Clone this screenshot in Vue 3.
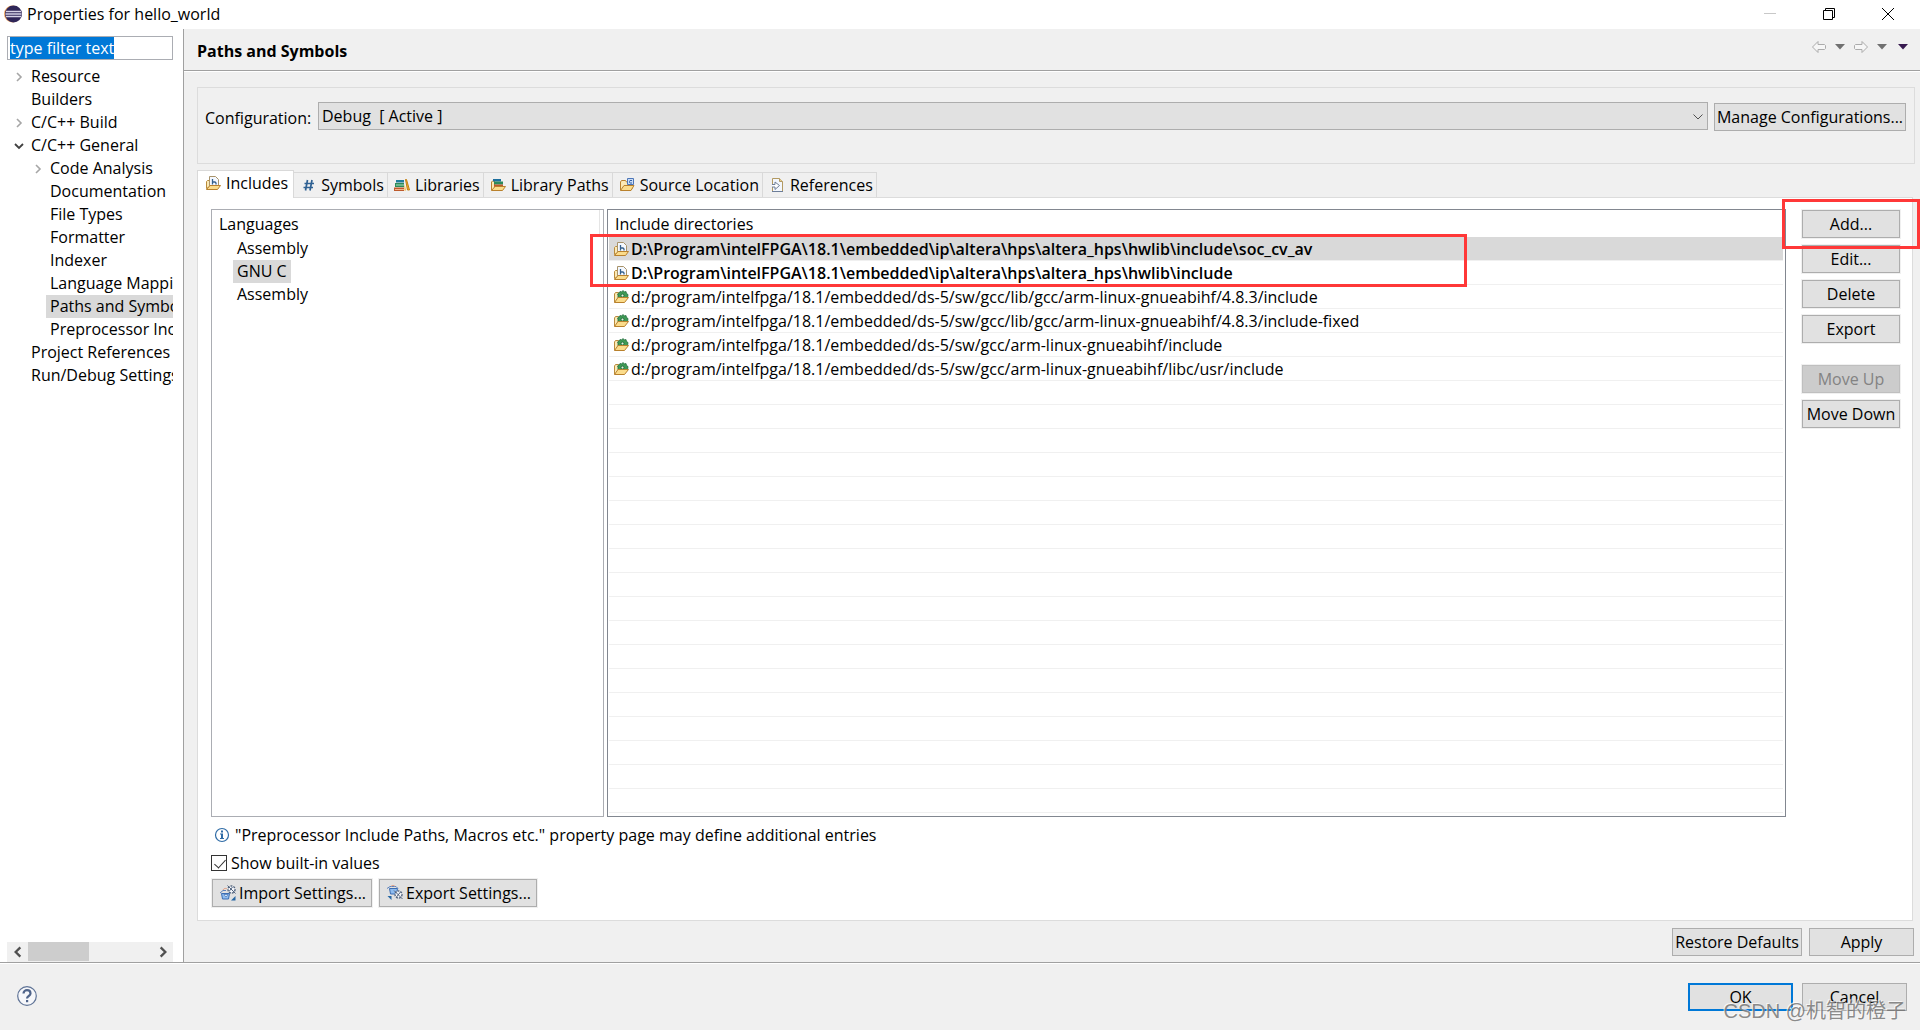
<template>
  <div class="dialog">
    <!-- icon sprite -->
    <svg class="sprite" aria-hidden="true">
      <symbol id="i-includes" viewBox="0 0 16 16">
        <path d="M1.5 13.5v-7l1-1H5v6z" fill="#fbe9b5" stroke="#b98b3c" />
        <path d="M4.5 1.5h6l3 3V11h-9z" fill="#f4f8ff" stroke="#a8936a" />
        <path d="M7.5 4v5.500M7.5 7H10l1 1v1.500" fill="none" stroke="#34608c" stroke-width="1.300" />
        <path d="M1.5 14.5 5 10.500h10.500l-3 4z" fill="#fbdc8b" stroke="#b9812d" />
      </symbol>
      <symbol id="i-symbols" viewBox="0 0 16 16">
        <path d="M7.5 3 5.500 13.500M12 3 10 13.500M4.500 6.500H14M3.500 10.500H13" fill="none" stroke="#2f6193" stroke-width="1.700" />
      </symbol>
      <symbol id="i-libraries" viewBox="0 0 16 16">
        <path d="M2 3h8v2.500H2z" fill="#1f7d9c" />
        <path d="M1 6h9v4H1z" fill="#2c8a5a" />
        <path d="M2 8h8" stroke="#a8dfbf" />
        <path d="M0 10.500h10V14H0z" fill="#bd5a2c" />
        <path d="M1 12.500h9" stroke="#f0b48c" />
        <path d="M11.500 2.500h1L15.500 13h-2z" fill="#f6b62c" stroke="#c07d13" />
        <path d="m10.500 7 1.500 6.500h-1.500z" fill="#f6b62c" />
      </symbol>
      <symbol id="i-libpaths" viewBox="0 0 16 16">
        <path d="M1.500 13V5l1-1h2v8z" fill="#fbe9b5" stroke="#b9812d" />
        <path d="M3 2h8v2.500H3z" fill="#1d6f9e" />
        <path d="M4 4.500h9v3H4z" fill="#2c8a5a" />
        <path d="M4 7.500h9V10H4z" fill="#bd5a2c" />
        <path d="M1.500 13.500 5 9.500h10.500l-3 4z" fill="#fbdc8b" stroke="#b9812d" />
      </symbol>
      <symbol id="i-source" viewBox="0 0 16 16">
        <path d="M1.500 13V5l1-1.500h4L7.500 5H13v7z" fill="#fbe9b5" stroke="#b9812d" />
        <path d="M8.500 1.500h6v6h-6z" fill="#c9dcf5" stroke="#4d76b8" />
        <path d="M13 3.500h-2l-.5 1v1l.5.500h2" fill="none" stroke="#2f5fa8" />
        <path d="M1.500 13.500 5 8.500h10l-3 5z" fill="#fbdc8b" stroke="#b9812d" />
      </symbol>
      <symbol id="i-references" viewBox="0 0 16 16">
        <path d="M3.500 1.500h7l3 3v10h-10z" fill="#f3f7fd" stroke="#b39a62" />
        <path d="M10.500 1.500v3h3" fill="#e7cf94" stroke="#b39a62" />
        <path d="M3 14.500h11" stroke="#6c7d98" />
        <path d="M3 7.500h3V5l4.500 3.500L6 12.500V10H3" fill="#fff" stroke="#6f7f97" />
      </symbol>
      <symbol id="i-builtin" viewBox="0 0 16 16">
        <path d="M1.500 13V5l1-1.500h3l1 1.500V11z" fill="#fbe9b5" stroke="#b98b3c" />
        <path d="M5 9V6l-.5-1L6 4l1-1.500 1.500.500L10 1.500l1.500 1.500L13 2.500l.500 2L15 5.500 14.500 9z" fill="#3f9a55" stroke="#226b3d" stroke-width=".8" />
        <circle cx="9.500" cy="6.500" r="1.500" fill="#e3f2df" stroke="#226b3d" />
        <path d="M1.500 13.500 5 8.500h10.500l-4 5z" fill="#fbdc8b" stroke="#b9812d" />
      </symbol>
      <symbol id="i-info" viewBox="0 0 16 16">
        <circle cx="8" cy="8" r="6.500" fill="#fff" stroke="#2e6ba6" stroke-width="1.200" />
        <path d="M7 3.500h2v2H7zM6 6.500h3V11h1v1H6v-1h1V7.500H6z" fill="#2e6ba6" />
      </symbol>
      <symbol id="i-import" viewBox="0 0 16 16">
        <path d="M1.500 8.500h8l-1 5.500h-6z" fill="#8ebcf0" stroke="#3c6db2" />
        <path d="M0 8 3 5.500h3" fill="none" stroke="#5d83bd" />
        <path d="M4 9.500h4L6 12z" fill="#fff" stroke="#3c6db2" stroke-width=".7" />
        <path d="M3 5c1-2 3-2 4-1" fill="none" stroke="#e1a58d" />
        <circle cx="11.500" cy="4.500" r="3.500" fill="#f4f6fa" stroke="#53657f" stroke-width="1.400" stroke-dasharray="2 1" />
        <path d="m7.500.5 8 8M12.500 2 9 6.500" stroke="#53657f" />
        <path d="M15.500 11v4.500H11z" fill="#2667a4" />
      </symbol>
      <symbol id="i-export" viewBox="0 0 16 16">
        <path d="M2.500 3.500h8l-1 5.500h-6z" fill="#8ebcf0" stroke="#3c6db2" />
        <path d="M0 3.500 3 1.500h6l2 2" fill="none" stroke="#5d83bd" />
        <path d="M4 1.500c1-1.500 3-1.500 4 0" fill="none" stroke="#e1a58d" />
        <circle cx="11.500" cy="9.500" r="3.500" fill="#f4f6fa" stroke="#53657f" stroke-width="1.400" stroke-dasharray="2 1" />
        <path d="m7 5.500 8.500 8.500M13.500 7 9.500 12" stroke="#53657f" />
        <path d="M.5 11h4v4z" fill="#2667a4" />
      </symbol>
    </svg>

    <header class="titlebar">
      <svg class="app-icon" viewBox="0 0 18 18">
        <circle cx="8.500" cy="9" r="8.500" fill="#f0a35c" />
        <circle cx="9.500" cy="9" r="8.500" fill="#2f2658" />
        <path d="M2 6.500h15M1.500 9h16M2 11.500h15" stroke="#d5d2e6" stroke-width="1.400" />
      </svg>
      <span class="title">Properties for hello_world</span>
      <div class="window-buttons">
        <button type="button" aria-label="Minimize" disabled>
          <svg viewBox="0 0 14 14"><path d="M1 6.500h12" stroke="#c8c8c8" /></svg>
        </button>
        <button type="button" aria-label="Restore">
          <svg viewBox="0 0 14 14"><path d="M1.500 3.500h9v9h-9zM3.500 3.500v-2h9v9h-2" fill="none" stroke="#000" /></svg>
        </button>
        <button type="button" aria-label="Close">
          <svg viewBox="0 0 14 14"><path d="m1 1 12 12M13 1 1 13" stroke="#000" /></svg>
        </button>
      </div>
    </header>

    <div class="body">
      <aside class="sidebar">
        <input ref="filterRef" v-model="filter" class="filter" type="text" aria-label="Filter" />
        <ul class="tree">
          <li v-for="item in pages" :key="item.name" :class="['tree-row', { child: item.child }]">
            <button v-if="item.state" type="button" class="twisty" :aria-label="'Toggle ' + item.name">
              <svg v-if="item.state === 'open'" viewBox="0 0 12 12"><path d="m2 4 4 4 4-4" fill="none" stroke="#404040" stroke-width="1.800" /></svg>
              <svg v-else viewBox="0 0 12 12"><path d="m4 2 4 4-4 4" fill="none" stroke="#a6a6a6" stroke-width="1.600" /></svg>
            </button>
            <span v-else class="twisty" />
            <span :class="['tree-label', { selected: item.name === currentPage }]">{{ item.name }}</span>
          </li>
        </ul>
        <div class="scrollbar">
          <button type="button" aria-label="Scroll left">
            <svg viewBox="0 0 12 12"><path d="M8 2 4 6l4 4" fill="none" stroke="#505050" stroke-width="2" /></svg>
          </button>
          <div class="track"><div class="thumb" /></div>
          <button type="button" aria-label="Scroll right">
            <svg viewBox="0 0 12 12"><path d="m4 2 4 4-4 4" fill="none" stroke="#505050" stroke-width="2" /></svg>
          </button>
        </div>
      </aside>

      <main class="page">
        <div class="page-header">
          <h1>{{ currentPage }}</h1>
          <div class="history">
            <button type="button" aria-label="Back">
              <svg width="16" height="14" viewBox="0 0 16 14"><path d="M1.500 7 7 1.500V4.500h6.500l1 1v3l-1 1H7v3z" fill="#f6f6f6" stroke="#ababab" /></svg>
            </button>
            <button type="button" aria-label="Back history">
              <svg width="10" height="6" viewBox="0 0 10 6"><path d="M0 0h10L5 5.500z" fill="#707070" /></svg>
            </button>
            <button type="button" aria-label="Forward">
              <svg width="16" height="14" viewBox="0 0 16 14"><path d="M14.500 7 9 1.500V4.500H2.500l-1 1v3l1 1H9v3z" fill="#f6f6f6" stroke="#ababab" /></svg>
            </button>
            <button type="button" aria-label="Forward history">
              <svg width="10" height="6" viewBox="0 0 10 6"><path d="M0 0h10L5 5.500z" fill="#707070" /></svg>
            </button>
            <button type="button" class="view-menu" aria-label="Menu">
              <svg width="10" height="6" viewBox="0 0 10 6"><path d="M0 0h10L5 5.500z" fill="#37194f" /></svg>
            </button>
          </div>
        </div>

        <div class="page-content">
          <section class="config">
            <label for="configuration">Configuration:</label>
            <div class="select-wrap">
              <select id="configuration">
                <option>Debug&nbsp; [ Active ]</option>
              </select>
              <svg class="chevron" viewBox="0 0 10 6"><path d="m.5.500 4.500 4.500L9.500.500" fill="none" stroke="#505050" /></svg>
            </div>
            <button type="button" class="btn manage">Manage Configurations...</button>
          </section>

          <div class="tabs" role="tablist">
            <button
              v-for="tab in tabs"
              :key="tab.name"
              type="button"
              role="tab"
              :class="['tab', { active: tab.name === activeTab }]"
              :aria-selected="tab.name === activeTab"
              @click="activeTab = tab.name"
            >
              <svg class="icon"><use :href="'#' + tab.icon" /></svg>
              <span>{{ tab.name }}</span>
            </button>
          </div>

          <section class="pane">
            <div class="lists">
              <div class="languages">
                <div class="list-header">Languages</div>
                <ul>
                  <li v-for="(lang, i) in languages" :key="i">
                    <span :class="{ selected: lang === 'GNU C' }">{{ lang }}</span>
                  </li>
                </ul>
              </div>

              <div class="directories">
                <table>
                  <thead>
                    <tr><th>Include directories</th></tr>
                  </thead>
                  <tbody>
                    <tr v-for="(dir, i) in directories" :key="dir.path" :class="{ user: dir.user, current: i === 0 }">
                      <td>
                        <div class="cell">
                          <svg class="icon"><use :href="dir.user ? '#i-includes' : '#i-builtin'" /></svg>
                          <span>{{ dir.path }}</span>
                        </div>
                      </td>
                    </tr>
                  </tbody>
                </table>
                <div class="empty-rows" />
                <div class="mark mark-paths" />
              </div>

              <div class="actions">
                <button type="button" class="btn">Add...</button>
                <button type="button" class="btn">Edit...</button>
                <button type="button" class="btn">Delete</button>
                <button type="button" class="btn">Export</button>
                <button type="button" class="btn move-up" disabled>Move Up</button>
                <button type="button" class="btn">Move Down</button>
                <div class="mark mark-add" />
              </div>
            </div>

            <p class="info">
              <svg class="icon"><use href="#i-info" /></svg>
              <span>"Preprocessor Include Paths, Macros etc." property page may define additional entries</span>
            </p>
            <label class="check">
              <input v-model="showBuiltin" type="checkbox" />
              <span>Show built-in values</span>
            </label>
            <div class="settings">
              <button type="button" class="btn">
                <svg class="icon"><use href="#i-import" /></svg>Import Settings...
              </button>
              <button type="button" class="btn">
                <svg class="icon"><use href="#i-export" /></svg>Export Settings...
              </button>
            </div>
          </section>

          <div class="page-buttons">
            <button type="button" class="btn restore">Restore Defaults</button>
            <button type="button" class="btn wide">Apply</button>
          </div>
        </div>
      </main>
    </div>

    <footer class="footer">
      <button type="button" class="help" aria-label="Help">
        <svg viewBox="0 0 20 20">
          <circle cx="10" cy="10" r="9.300" fill="#f6f7fa" stroke="#5f7396" stroke-width="1.200" />
          <path d="M6.500 7.500c0-4.500 7-4.500 7 0 0 2.500-3.500 2.500-3.500 5" fill="none" stroke="#4f648a" stroke-width="2.200" />
          <path d="M9 14h2.200v2.200H9z" fill="#4f648a" />
        </svg>
      </button>
      <button type="button" class="btn wide ok">OK</button>
      <button type="button" class="btn wide">Cancel</button>
      <span class="watermark">CSDN @机智的橙子</span>
    </footer>
  </div>
</template>

<script setup>
import { ref, onMounted } from 'vue'

const filterRef = ref()
const filter = ref('type filter text')
const currentPage = ref('Paths and Symbols')
const activeTab = ref('Includes')
const showBuiltin = ref(true)

const pages = [
  { name: 'Resource', state: 'closed' },
  { name: 'Builders' },
  { name: 'C/C++ Build', state: 'closed' },
  { name: 'C/C++ General', state: 'open' },
  { name: 'Code Analysis', state: 'closed', child: true },
  { name: 'Documentation', child: true },
  { name: 'File Types', child: true },
  { name: 'Formatter', child: true },
  { name: 'Indexer', child: true },
  { name: 'Language Mappings', child: true },
  { name: 'Paths and Symbols', child: true },
  { name: 'Preprocessor Include Paths', child: true },
  { name: 'Project References' },
  { name: 'Run/Debug Settings' }
]

const tabs = [
  { name: 'Includes', icon: 'i-includes' },
  { name: 'Symbols', icon: 'i-symbols' },
  { name: 'Libraries', icon: 'i-libraries' },
  { name: 'Library Paths', icon: 'i-libpaths' },
  { name: 'Source Location', icon: 'i-source' },
  { name: 'References', icon: 'i-references' }
]

const languages = ['Assembly', 'GNU C', 'Assembly']

const directories = [
  { path: 'D:\\Program\\intelFPGA\\18.1\\embedded\\ip\\altera\\hps\\altera_hps\\hwlib\\include\\soc_cv_av', user: true },
  { path: 'D:\\Program\\intelFPGA\\18.1\\embedded\\ip\\altera\\hps\\altera_hps\\hwlib\\include', user: true },
  { path: 'd:/program/intelfpga/18.1/embedded/ds-5/sw/gcc/lib/gcc/arm-linux-gnueabihf/4.8.3/include' },
  { path: 'd:/program/intelfpga/18.1/embedded/ds-5/sw/gcc/lib/gcc/arm-linux-gnueabihf/4.8.3/include-fixed' },
  { path: 'd:/program/intelfpga/18.1/embedded/ds-5/sw/gcc/arm-linux-gnueabihf/include' },
  { path: 'd:/program/intelfpga/18.1/embedded/ds-5/sw/gcc/arm-linux-gnueabihf/libc/usr/include' }
]

onMounted(() => {
  filterRef.value.focus()
  filterRef.value.select()
})
</script>

<style>
body {
  margin: 0;
}
</style>

<style scoped>
* {
  box-sizing: border-box;
}

.dialog {
  display: flex;
  flex-direction: column;
  min-height: 100vh;
  overflow: hidden;
  background: #f0f0f0;
  color: #000;
  font-family: "Open Sans", "Noto Sans", "Noto Sans CJK SC", sans-serif;
  font-size: 16px;
  line-height: 22px;
  white-space: nowrap;
}

.sprite {
  position: absolute;
  width: 0;
  height: 0;
}

button,
input,
select {
  font: inherit;
  color: inherit;
}

button {
  display: flex;
  align-items: center;
  justify-content: center;
  padding: 0;
  border: 0;
  background: none;
}

ul {
  margin: 0;
  padding: 0;
  list-style: none;
}

.icon {
  flex: none;
  width: 16px;
  height: 16px;
}

.btn {
  height: 28px;
  border: 1px solid #adadad;
  background: #e1e1e1;
}

.btn:disabled {
  border-color: #bfbfbf;
  background: #cccccc;
  color: #838383;
}

.wide {
  width: 105px;
}

.selected {
  background: #d9d9d9;
}

/* title bar */
.titlebar {
  display: flex;
  align-items: center;
  height: 29px;
  padding: 0 3px 1px 4px;
  background: #fff;
}

.app-icon {
  width: 18px;
  height: 18px;
  margin-right: 5px;
}

.window-buttons {
  display: flex;
  margin-left: auto;
}

.window-buttons button {
  width: 59px;
  height: 28px;
}

.window-buttons svg {
  width: 14px;
  height: 14px;
}

.body {
  display: flex;
  flex: 1;
  border-bottom: 1px solid #a0a0a0;
}

/* sidebar */
.sidebar {
  display: flex;
  flex-direction: column;
  flex: none;
  width: 184px;
  padding: 7px 10px 0 7px;
  border-right: 1px solid #a0a0a0;
  background: #fff;
}

.filter {
  width: 100%;
  height: 24px;
  padding: 0 2px;
  border: 1px solid #abadb3;
  border-radius: 0;
  outline: none;
  background: #fff;
  line-height: 20px;
}

.filter::selection {
  background: #0078d7;
  color: #fff;
}

.tree {
  flex: 1;
  padding-top: 5px;
  overflow: hidden;
}

.tree-row {
  display: flex;
  align-items: center;
  height: 23px;
}

.tree-row.child {
  padding-left: 19px;
}

.twisty {
  flex: none;
  width: 20px;
  height: 23px;
  padding-left: 4px;
}

.twisty svg {
  width: 12px;
  height: 12px;
}

.tree-label {
  height: 23px;
  padding: 0 4px;
}

.scrollbar {
  display: flex;
  height: 20px;
  background: #f0f0f0;
}

.scrollbar button {
  width: 21px;
}

.scrollbar svg {
  width: 14px;
  height: 14px;
}

.track {
  flex: 1;
}

.thumb {
  width: 49%;
  height: 19px;
  background: #cdcdcd;
}

/* page */
.page {
  display: flex;
  flex-direction: column;
  flex: 1;
  min-width: 0;
}

.page-header {
  display: flex;
  align-items: center;
  justify-content: space-between;
  height: 42px;
  padding: 2px 12px 0 13px;
  border-bottom: 1px solid #a0a0a0;
  box-shadow: 0 1px #fff;
}

h1 {
  margin: 0;
  font-size: 16px;
  font-weight: 700;
}

.history {
  display: flex;
  align-items: center;
  gap: 8px;
  padding-bottom: 8px;
}

.view-menu {
  margin-left: 3px;
}

.page-content {
  display: flex;
  flex-direction: column;
  flex: 1;
  padding: 16px 5px 6px 13px;
}

.config {
  display: flex;
  height: 77px;
  padding: 14px 8px 0 7px;
  border: 1px solid #dcdcdc;
}

.config label {
  width: 113px;
  padding-top: 5px;
}

.select-wrap {
  position: relative;
  flex: 1;
}

.select-wrap select {
  width: 100%;
  height: 28px;
  padding: 0 3px;
  border: 1px solid #adadad;
  border-radius: 0;
  background: #e1e1e1;
  appearance: none;
}

.chevron {
  position: absolute;
  top: 12px;
  right: 5px;
  width: 10px;
  height: 6px;
}

.manage {
  width: 192px;
  margin: 1px 0 0 6px;
}

/* tabs */
.tabs {
  display: flex;
  align-items: flex-end;
  margin-top: 6px;
}

.tab {
  gap: 5px;
  height: 25px;
  padding: 0 3px 0 6px;
  border: 1px solid #d9d9d9;
  border-width: 1px 1px 0 0;
  background: #f0f0f0;
}

.tab.active {
  position: relative;
  height: 28px;
  margin-bottom: -1px;
  padding: 0 5px 3px 7px;
  border-left-width: 1px;
  background: #fff;
}

.pane {
  display: flex;
  flex-direction: column;
  flex: 1;
  margin-right: 2px;
  padding: 11px 12px 13px 13px;
  border: 1px solid #dcdcdc;
  background: #fff;
}

.lists {
  display: flex;
  flex: 1;
}

.languages {
  width: 393px;
  margin-right: 3px;
  border: 1px solid #abadb3;
}

.list-header {
  height: 27px;
  margin-right: 3px;
  padding: 3px 7px 0;
  border-right: 1px solid #e5e5e5;
}

.languages li {
  height: 23px;
  padding-left: 21px;
}

.languages li span {
  display: inline-block;
  height: 23px;
  padding: 0 4px;
}

.directories {
  position: relative;
  display: flex;
  flex-direction: column;
  flex: 1;
  padding: 0 2px 0 1px;
  border: 1px solid #828790;
}

table {
  width: 100%;
  border-collapse: collapse;
}

th {
  height: 27px;
  padding: 3px 6px 0;
  font-weight: 400;
  text-align: left;
  vertical-align: top;
}

td {
  height: 24px;
  padding: 0;
  box-shadow: inset 0 -1px #f0f0f0;
}

.cell {
  display: flex;
  align-items: center;
  height: 24px;
  padding-left: 4px;
  gap: 2px;
}

.user {
  font-weight: 600;
}

.current td {
  background: #d9d9d9;
}

.empty-rows {
  flex: 1;
  background: repeating-linear-gradient(#fff 0 23px, #f0f0f0 23px 24px);
}

.actions {
  position: relative;
  display: flex;
  flex-direction: column;
  gap: 7px;
  width: 98px;
  margin: 1px 0 0 16px;
}

.actions .btn,
.settings .btn {
  box-shadow: 0 0 0 1px #f0f0f0;
}

.actions .move-up {
  margin-top: 15px;
}

/* red highlight frames */
.mark {
  position: absolute;
  border: 3px solid #ff3838;
  pointer-events: none;
}

.mark-paths {
  top: 24px;
  left: -18px;
  width: 877px;
  height: 53px;
}

.mark-add {
  top: -11px;
  left: -20px;
  width: 138px;
  height: 50px;
}

.info {
  display: flex;
  align-items: center;
  gap: 5px;
  margin: 7px 0 0;
  padding-left: 3px;
}

.check {
  display: flex;
  align-items: center;
  gap: 4px;
  margin-top: 6px;
}

.check input {
  position: relative;
  width: 16px;
  height: 16px;
  margin: 0;
  border: 1px solid #333;
  background: #fff;
  appearance: none;
}

.check input:checked::after {
  content: "";
  position: absolute;
  top: 1px;
  left: 5px;
  width: 5px;
  height: 10px;
  border: solid #333;
  border-width: 0 1px 1px 0;
  transform: rotate(42deg);
}

.settings {
  display: flex;
  gap: 7px;
  margin: 5px 0 0 1px;
}

.settings .btn {
  gap: 3px;
  padding: 0 5px 0 7px;
}

.page-buttons {
  display: flex;
  justify-content: flex-end;
  gap: 7px;
  margin-top: 7px;
  padding-right: 1px;
}

.restore {
  width: 130px;
}

/* footer */
.footer {
  position: relative;
  display: flex;
  align-items: flex-start;
  gap: 9px;
  height: 67px;
  padding: 20px 13px 0 17px;
  box-shadow: inset 0 1px #fff;
}

.help {
  width: 20px;
  height: 20px;
  margin: 3px auto 0 0;
}

.ok {
  border: 2px solid #0078d7;
}

.watermark {
  position: absolute;
  right: 14px;
  bottom: 6px;
  color: rgba(110, 110, 110, 0.8);
  font-family: "Liberation Sans", "Noto Sans CJK SC", sans-serif;
  font-size: 20px;
  line-height: 26px;
  text-shadow: -1px -1px rgba(255, 255, 255, 0.7);
  pointer-events: none;
}
</style>
